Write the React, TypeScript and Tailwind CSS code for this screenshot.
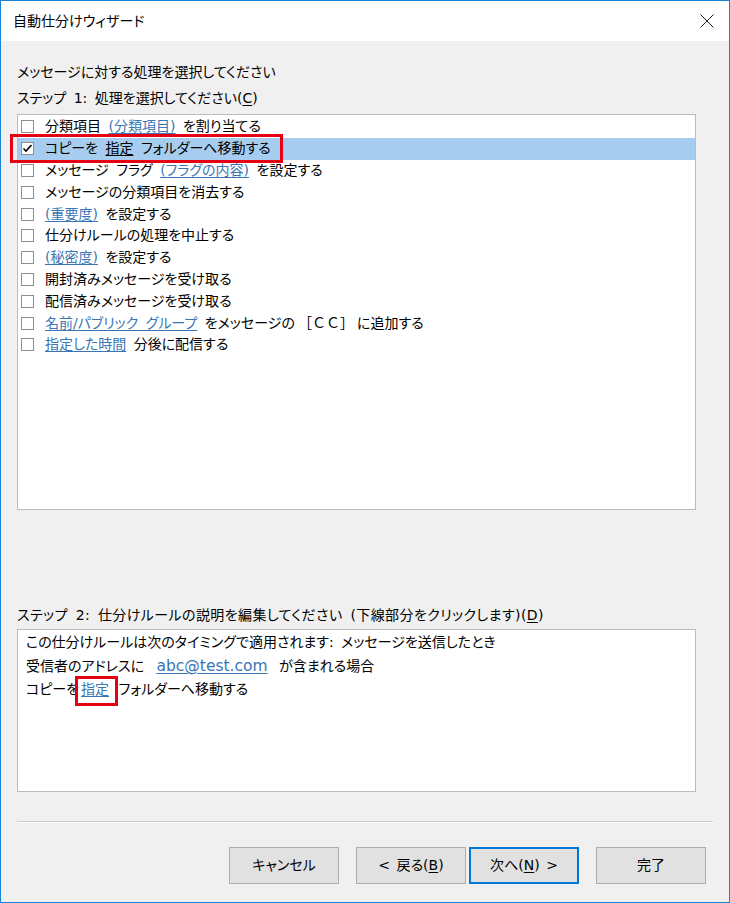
import React from 'react';

type Part = { t: string; link?: boolean; u?: boolean; wide?: boolean };

const FONT = "[font-family:'DejaVu_Sans','Noto_Sans_CJK_JP',sans-serif] [font-feature-settings:'palt']";

const ACTIONS: { parts: Part[]; checked?: boolean }[] = [
  { parts: [{ t: '分類項目 ' }, { t: '(分類項目)', link: true }, { t: ' を割り当てる' }] },
  { parts: [{ t: 'コピーを ' }, { t: '指定', u: true }, { t: ' フォルダーへ移動する' }], checked: true },
  { parts: [{ t: 'メッセージ フラグ ' }, { t: '(フラグの内容)', link: true }, { t: ' を設定する' }] },
  { parts: [{ t: 'メッセージの分類項目を消去する' }] },
  { parts: [{ t: '(重要度)', link: true }, { t: ' を設定する' }] },
  { parts: [{ t: '仕分けルールの処理を中止する' }] },
  { parts: [{ t: '(秘密度)', link: true }, { t: ' を設定する' }] },
  { parts: [{ t: '開封済みメッセージを受け取る' }] },
  { parts: [{ t: '配信済みメッセージを受け取る' }] },
  {
    parts: [
      { t: '名前/パブリック グループ', link: true },
      { t: ' をメッセージの' },
      { t: '［ＣＣ］', wide: true },
      { t: 'に追加する' },
    ],
  },
  { parts: [{ t: '指定した時間', link: true }, { t: ' 分後に配信する' }] },
];

const Checkbox: React.FC<{ checked?: boolean }> = ({ checked }) => (
  <span className="w-[13px] h-[13px] border border-[#8f8f8f] bg-white flex items-center justify-center shrink-0">
    {checked && (
      <svg width="11" height="11" viewBox="0 0 11 11">
        <path d="M1.5 5.5 L4 8 L9.5 2" stroke="#000" strokeWidth="1.6" fill="none" />
      </svg>
    )}
  </span>
);

const Btn: React.FC<{ children: React.ReactNode; primary?: boolean }> = ({ children, primary }) => (
  <button
    className={
      'w-[110px] h-[37px] bg-[#e1e1e1] text-[14px] text-black flex items-center justify-center [word-spacing:2px] ' +
      (primary ? 'border-2 border-[#0078d7]' : 'border border-[#adadad]')
    }
  >
    {children}
  </button>
);

export default function App() {
  return (
    <div className={`w-[730px] h-[903px] border border-[#1883d7] flex flex-col text-black ${FONT}`}>
      <div className="h-[40px] bg-white flex items-center justify-between pl-[12px] pr-[15px] shrink-0">
        <span className="text-[14px]">自動仕分けウィザード</span>
        <svg width="14" height="14" viewBox="0 0 14 14">
          <path d="M0.5 0.5 L13.5 13.5 M13.5 0.5 L0.5 13.5" stroke="#222" strokeWidth="1" />
        </svg>
      </div>

      <div className="flex-1 bg-[#f0f0f0] px-[16px] flex flex-col text-[14px] [word-spacing:3px]">
        <div className="mt-[20px] h-[22px] leading-[22px]">メッセージに対する処理を選択してください</div>
        <div className="mt-[4px] h-[22px] leading-[22px]">
          ステップ 1: 処理を選択してください(<span className="underline underline-offset-2">C</span>)
        </div>

        <div className="mt-[5px] w-[679px] h-[396px] bg-white border border-[#bcbcbc] pt-[1px] flex flex-col">
          {ACTIONS.map((a, i) => (
            <div
              key={i}
              className={
                'relative h-[21.8px] flex items-center pl-[3px] shrink-0 ' + (a.checked ? 'bg-[#a6cdef]' : '')
              }
            >
              <Checkbox checked={a.checked} />
              <span className="ml-[11px] whitespace-nowrap leading-[21px]">
                {a.parts.map((p, j) => (
                  <span
                    key={j}
                    className={
                      p.link
                        ? 'text-[#3a75b5] underline underline-offset-2'
                        : p.u
                          ? 'underline underline-offset-2'
                          : p.wide
                            ? '[font-feature-settings:normal] px-[3px]'
                            : ''
                    }
                  >
                    {p.t}
                  </span>
                ))}
              </span>
              {a.checked && (
                <span className="absolute left-[-8px] top-[-4px] w-[273px] h-[29px] border-[3px] border-[#e60012]" />
              )}
            </div>
          ))}
        </div>

        <div className="mt-[94px] h-[22px] leading-[22px] whitespace-nowrap tracking-[0.4px]">
          ステップ 2: 仕分けルールの説明を編集してください (下線部分をクリックします)(<span className="underline underline-offset-2">D</span>)
        </div>

        <div className="mt-[3px] w-[679px] h-[163px] bg-white border border-[#bcbcbc] pl-[8px] pt-[1px] leading-[23.5px]">
          <div>この仕分けルールは次のタイミングで適用されます: メッセージを送信したとき</div>
          <div>
            受信者のアドレスに{' '}
            <span className="ml-[5px] mr-[4px] text-[#3a75b5] underline underline-offset-2 text-[15.5px]">abc@test.com</span>{' '}
            が含まれる場合
          </div>
          <div>
            コピーを
            <span className="relative inline-block">
              <span className="text-[#3a75b5] underline underline-offset-2 px-[2px]">指定</span>
              <span className="absolute left-[-4px] top-[-2px] w-[43px] h-[30px] border-[3px] border-[#e60012]" />
            </span>{' '}
            フォルダーへ移動する
          </div>
        </div>

        <div className="mt-[29px] w-[696px] h-[2px] border-t border-[#c8c8c8] border-b border-b-white" />

        <div className="mt-[24px] flex items-center pl-[212px]">
          <Btn>キャンセル</Btn>
          <div className="ml-[17px] flex gap-[3px]">
            <Btn>
              &lt; 戻る(<span className="underline underline-offset-2">B</span>)
            </Btn>
            <Btn primary>
              次へ(<span className="underline underline-offset-2">N</span>) &gt;
            </Btn>
          </div>
          <div className="ml-[17px]">
            <Btn>完了</Btn>
          </div>
        </div>
      </div>
    </div>
  );
}
